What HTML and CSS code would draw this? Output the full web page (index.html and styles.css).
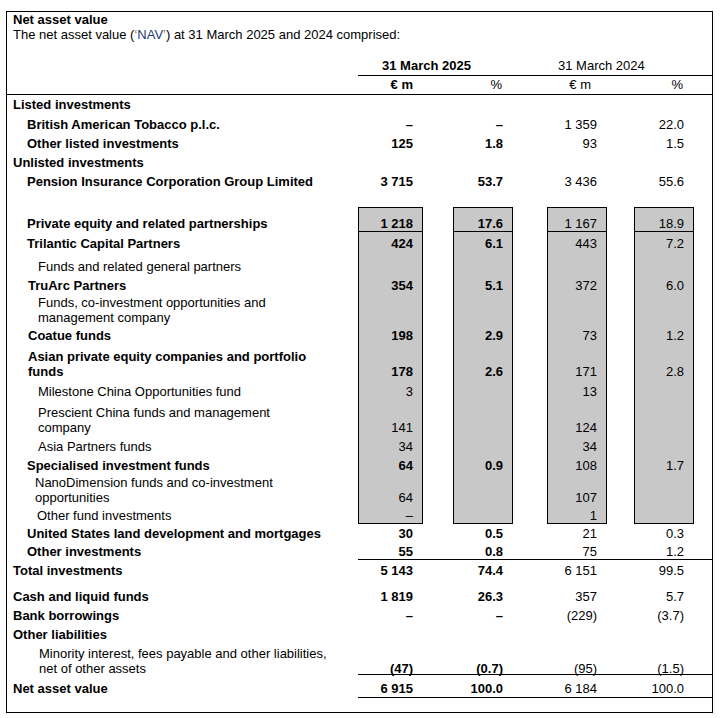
FILE: index.html
```html
<!DOCTYPE html>
<html lang="en">
<head>
<meta charset="utf-8">
<title>Net asset value</title>
<link rel="stylesheet" href="styles.css">
</head>
<body>
<div class="sheet">
  <div class="title">Net asset value</div>
  <div class="intro">The net asset value (<span class="q">‘</span><span class="nav">NAV</span><span class="q">’</span>) at 31 March 2025 and 2024 comprised:</div>

  <div class="row hd1">
    <div></div>
    <div class="hc y25 b">31 March 2025</div>
    <div class="hc y24">31 March 2024</div>
  </div>
  <div class="row hd2">
    <div></div>
    <div class="c k1"><div class="box b">€ m</div></div>
    <div class="c k2"><div class="box">%</div></div>
    <div class="c k3"><div class="box">€ m</div></div>
    <div class="c k4"><div class="box">%</div></div>
  </div>

  <div class="row h19">
    <div class="lab b l0">Listed investments</div>
    <div class="c k1"><div class="box"></div></div>
    <div class="c k2"><div class="box"></div></div>
    <div class="c k3"><div class="box"></div></div>
    <div class="c k4"><div class="box"></div></div>
  </div>
  <div class="row h20">
    <div class="lab b l1">British American Tobacco p.l.c.</div>
    <div class="c k1"><div class="box b">–</div></div>
    <div class="c k2"><div class="box b">–</div></div>
    <div class="c k3"><div class="box">1 359</div></div>
    <div class="c k4"><div class="box">22.0</div></div>
  </div>
  <div class="row h19">
    <div class="lab b l1">Other listed investments</div>
    <div class="c k1"><div class="box b">125</div></div>
    <div class="c k2"><div class="box b">1.8</div></div>
    <div class="c k3"><div class="box">93</div></div>
    <div class="c k4"><div class="box">1.5</div></div>
  </div>
  <div class="row h19">
    <div class="lab b l0">Unlisted investments</div>
    <div class="c k1"><div class="box"></div></div>
    <div class="c k2"><div class="box"></div></div>
    <div class="c k3"><div class="box"></div></div>
    <div class="c k4"><div class="box"></div></div>
  </div>
  <div class="row h19">
    <div class="lab b l1">Pension Insurance Corporation Group Limited</div>
    <div class="c k1"><div class="box b">3 715</div></div>
    <div class="c k2"><div class="box b">53.7</div></div>
    <div class="c k3"><div class="box">3 436</div></div>
    <div class="c k4"><div class="box">55.6</div></div>
  </div>
  <div class="row h16"></div>

  <div class="row h25 gy gtop">
    <div class="lab b l1">Private equity and related partnerships</div>
    <div class="c k1"><div class="box b">1 218</div></div>
    <div class="c k2"><div class="box b">17.6</div></div>
    <div class="c k3"><div class="box">1 167</div></div>
    <div class="c k4"><div class="box">18.9</div></div>
  </div>
  <div class="row h21 gy">
    <div class="lab b l1">Trilantic Capital Partners</div>
    <div class="c k1"><div class="box b">424</div></div>
    <div class="c k2"><div class="box b">6.1</div></div>
    <div class="c k3"><div class="box">443</div></div>
    <div class="c k4"><div class="box">7.2</div></div>
  </div>
  <div class="row h23 gy">
    <div class="lab l2">Funds and related general partners</div>
    <div class="c k1"><div class="box"></div></div>
    <div class="c k2"><div class="box"></div></div>
    <div class="c k3"><div class="box"></div></div>
    <div class="c k4"><div class="box"></div></div>
  </div>
  <div class="row h19 gy">
    <div class="lab b l1b">TruArc Partners</div>
    <div class="c k1"><div class="box b">354</div></div>
    <div class="c k2"><div class="box b">5.1</div></div>
    <div class="c k3"><div class="box">372</div></div>
    <div class="c k4"><div class="box">6.0</div></div>
  </div>
  <div class="row h31 gy">
    <div class="lab l2">Funds, co-investment opportunities and<br>management company</div>
    <div class="c k1"><div class="box"></div></div>
    <div class="c k2"><div class="box"></div></div>
    <div class="c k3"><div class="box"></div></div>
    <div class="c k4"><div class="box"></div></div>
  </div>
  <div class="row h19 gy">
    <div class="lab b l1b">Coatue funds</div>
    <div class="c k1"><div class="box b">198</div></div>
    <div class="c k2"><div class="box b">2.9</div></div>
    <div class="c k3"><div class="box">73</div></div>
    <div class="c k4"><div class="box">1.2</div></div>
  </div>
  <div class="row h36 gy">
    <div class="lab b l1b">Asian private equity companies and portfolio<br>funds</div>
    <div class="c k1"><div class="box b">178</div></div>
    <div class="c k2"><div class="box b">2.6</div></div>
    <div class="c k3"><div class="box">171</div></div>
    <div class="c k4"><div class="box">2.8</div></div>
  </div>
  <div class="row h20 gy">
    <div class="lab l2">Milestone China Opportunities fund</div>
    <div class="c k1"><div class="box">3</div></div>
    <div class="c k2"><div class="box"></div></div>
    <div class="c k3"><div class="box">13</div></div>
    <div class="c k4"><div class="box"></div></div>
  </div>
  <div class="row h36 gy">
    <div class="lab l2">Prescient China funds and management<br>company</div>
    <div class="c k1"><div class="box">141</div></div>
    <div class="c k2"><div class="box"></div></div>
    <div class="c k3"><div class="box">124</div></div>
    <div class="c k4"><div class="box"></div></div>
  </div>
  <div class="row h19 gy">
    <div class="lab l2">Asia Partners funds</div>
    <div class="c k1"><div class="box">34</div></div>
    <div class="c k2"><div class="box"></div></div>
    <div class="c k3"><div class="box">34</div></div>
    <div class="c k4"><div class="box"></div></div>
  </div>
  <div class="row h19 gy">
    <div class="lab b l1">Specialised investment funds</div>
    <div class="c k1"><div class="box b">64</div></div>
    <div class="c k2"><div class="box b">0.9</div></div>
    <div class="c k3"><div class="box">108</div></div>
    <div class="c k4"><div class="box">1.7</div></div>
  </div>
  <div class="row h31 gy">
    <div class="lab l2n">NanoDimension funds and co-investment<br>opportunities</div>
    <div class="c k1"><div class="box">64</div></div>
    <div class="c k2"><div class="box"></div></div>
    <div class="c k3"><div class="box">107</div></div>
    <div class="c k4"><div class="box"></div></div>
  </div>
  <div class="row h18 gy gbot">
    <div class="lab l2o">Other fund investments</div>
    <div class="c k1"><div class="box">–</div></div>
    <div class="c k2"><div class="box"></div></div>
    <div class="c k3"><div class="box">1</div></div>
    <div class="c k4"><div class="box"></div></div>
  </div>

  <div class="row h19">
    <div class="lab b l1">United States land development and mortgages</div>
    <div class="c k1"><div class="box b">30</div></div>
    <div class="c k2"><div class="box b">0.5</div></div>
    <div class="c k3"><div class="box">21</div></div>
    <div class="c k4"><div class="box">0.3</div></div>
  </div>
  <div class="row h17 rule tight">
    <div class="lab b l1">Other investments</div>
    <div class="c k1"><div class="box b">55</div></div>
    <div class="c k2"><div class="box b">0.8</div></div>
    <div class="c k3"><div class="box">75</div></div>
    <div class="c k4"><div class="box">1.2</div></div>
  </div>
  <div class="row h20">
    <div class="lab b l0">Total investments</div>
    <div class="c k1"><div class="box b">5 143</div></div>
    <div class="c k2"><div class="box b">74.4</div></div>
    <div class="c k3"><div class="box">6 151</div></div>
    <div class="c k4"><div class="box">99.5</div></div>
  </div>
  <div class="row h26">
    <div class="lab b l0">Cash and liquid funds</div>
    <div class="c k1"><div class="box b">1 819</div></div>
    <div class="c k2"><div class="box b">26.3</div></div>
    <div class="c k3"><div class="box">357</div></div>
    <div class="c k4"><div class="box">5.7</div></div>
  </div>
  <div class="row h19">
    <div class="lab b l0">Bank borrowings</div>
    <div class="c k1"><div class="box b">–</div></div>
    <div class="c k2"><div class="box b">–</div></div>
    <div class="c k3"><div class="box">(229)</div></div>
    <div class="c k4"><div class="box">(3.7)</div></div>
  </div>
  <div class="row h19">
    <div class="lab b l0">Other liabilities</div>
    <div class="c k1"><div class="box"></div></div>
    <div class="c k2"><div class="box"></div></div>
    <div class="c k3"><div class="box"></div></div>
    <div class="c k4"><div class="box"></div></div>
  </div>
  <div class="row h31 rule tight low">
    <div class="lab l3"><span class="v">Minority interest, fees payable and other liabilities,<br>net of other assets</span></div>
    <div class="c k1"><div class="box b"><span class="v">(47)</span></div></div>
    <div class="c k2"><div class="box b"><span class="v">(0.7)</span></div></div>
    <div class="c k3"><div class="box"><span class="v">(95)</span></div></div>
    <div class="c k4"><div class="box"><span class="v">(1.5)</span></div></div>
  </div>
  <div class="row h23 rule nav-row">
    <div class="lab b l0">Net asset value</div>
    <div class="c k1"><div class="box b">6 915</div></div>
    <div class="c k2"><div class="box b">100.0</div></div>
    <div class="c k3"><div class="box">6 184</div></div>
    <div class="c k4"><div class="box">100.0</div></div>
  </div>
</div>
</body>
</html>
```

FILE: styles.css
```css
* { box-sizing: border-box; }

html, body {
  margin: 0;
  padding: 0;
  background: #fff;
}

body {
  font-family: "Liberation Sans", Arial, Helvetica, sans-serif;
  font-size: 13px;
  line-height: 15px;
  color: #000;
}

.sheet {
  margin: 11px 0 0 6px;
  width: 707px;
  height: 702px;
  border: 1px solid #000;
}

.title {
  font-weight: bold;
  padding-left: 6px;
}

.intro { padding-left: 6px; }
.q { color: #c0651a; }
.nav { color: #1f3a78; }

.b { font-weight: bold; }

.row {
  display: grid;
  grid-template-columns: 351px 95px 94px 87px 78px;
}

/* header rows */
.hd1 { height: 34px; }
.hc {
  grid-column: span 2;
  display: flex;
  align-items: flex-end;
  padding-bottom: 2px;
  border-bottom: 1px solid #000;
  white-space: nowrap;
}
.y25 { padding-left: 24px; }
.y24 { padding-left: 11px; }

.hd2 {
  height: 19px;
  border-bottom: 1px solid #000;
}
.hd2 .k2 .box, .hd2 .k4 .box { padding-right: 10px; }
.hd2 .k3 .box { padding-right: 15px; }

/* cells */
.lab {
  display: flex;
  align-items: flex-end;
  white-space: nowrap;
  padding-bottom: 2px;
}

.c { display: flex; }

.box {
  width: 60px;
  display: flex;
  align-items: flex-end;
  justify-content: flex-end;
  padding: 0 9px 2px 0;
  border-left: 1px solid transparent;
  border-right: 1px solid transparent;
  white-space: nowrap;
}
.k1 .box { width: 65px; }

/* indents */
.l0 { padding-left: 6px; }
.l1 { padding-left: 20px; }
.l1b { padding-left: 21px; }
.l2 { padding-left: 31px; }
.l2n { padding-left: 28px; }
.l2o { padding-left: 30px; }
.l3 { padding-left: 32px; }

/* grey boxes */
.gy .box {
  background: #c8c8c8;
  border-left-color: #000;
  border-right-color: #000;
}
.gtop .box {
  border-top: 1px solid #000;
  border-bottom: 1px solid #000;
  padding-bottom: 0;
}
.gtop .lab { padding-bottom: 1px; }
.gbot .box {
  border-bottom: 1px solid #000;
  padding-bottom: 0;
}
.gbot .lab { padding-bottom: 1px; }

/* rules */
.rule .c { border-bottom: 1px solid #000; }
.tight .box { padding-bottom: 0; }
.tight .lab { padding-bottom: 1px; }
.low .v { margin-bottom: -2px; }
.nav-row .box { padding-bottom: 1px; }
.nav-row .lab { padding-bottom: 2px; }

/* row heights */
.h16 { height: 16px; }
.h17 { height: 17px; }
.h18 { height: 18px; }
.h19 { height: 19px; }
.h20 { height: 20px; }
.h21 { height: 21px; }
.h23 { height: 23px; }
.h25 { height: 25px; }
.h26 { height: 26px; }
.h31 { height: 31px; }
.h36 { height: 36px; }
```
